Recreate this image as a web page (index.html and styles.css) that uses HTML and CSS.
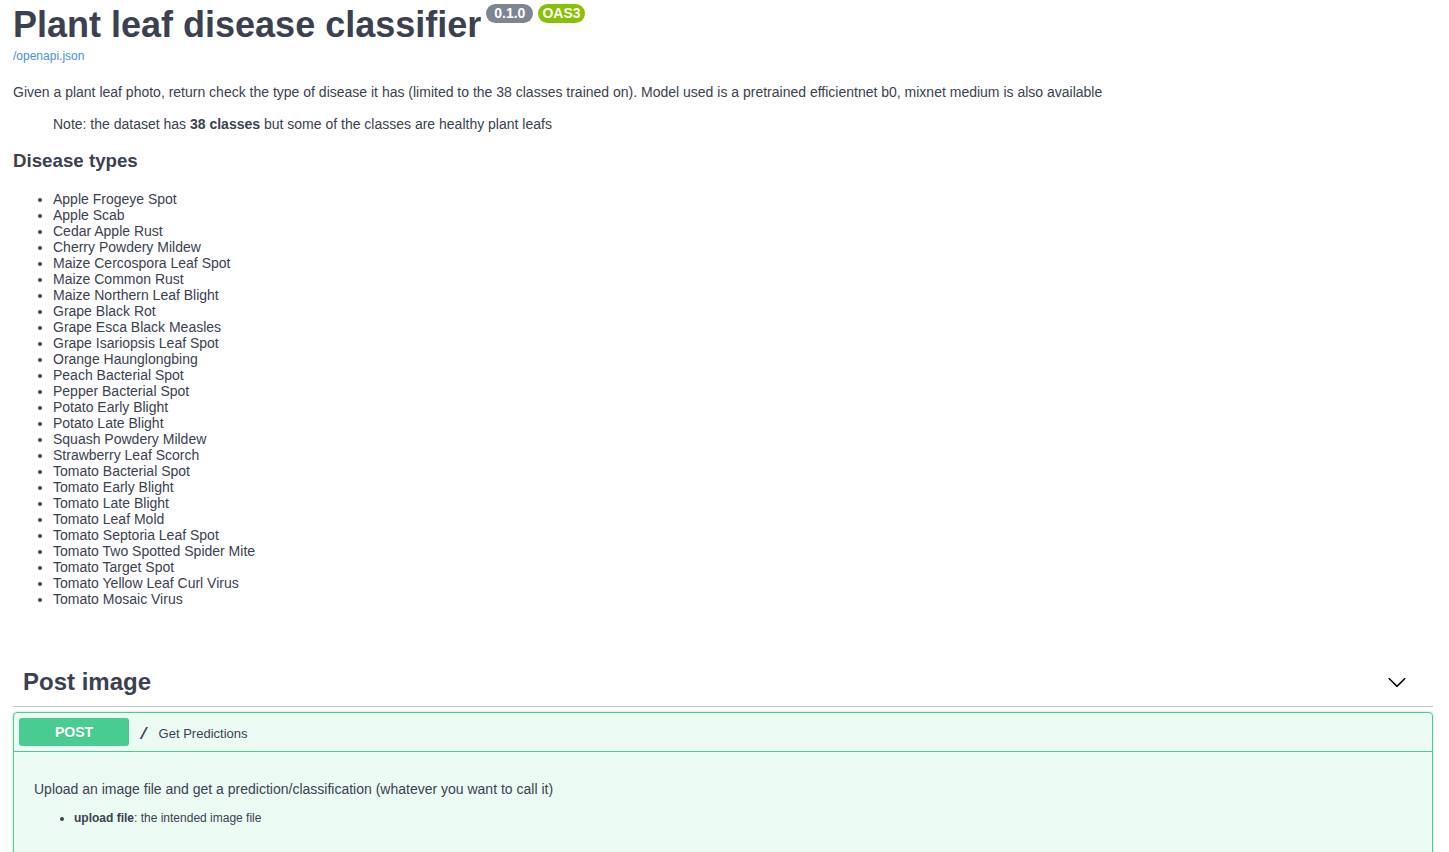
FILE: index.html
```html
<!DOCTYPE html>
<html lang="en">
<head>
<meta charset="utf-8">
<title>Plant leaf disease classifier</title>
<link rel="stylesheet" href="styles.css">
</head>
<body>
<div class="wrapper">
  <section class="info">
    <div class="main">
      <div class="title-row">
        <h2 class="title">Plant leaf disease classifier</h2>
        <span class="badge badge-version">0.1.0</span>
        <span class="badge badge-oas">OAS3</span>
      </div>
      <a class="url" href="#">/openapi.json</a>
    </div>
    <div class="description">
      <p>Given a plant leaf photo, return check the type of disease it has (limited to the 38 classes trained on). Model used is a pretrained efficientnet b0, mixnet medium is also available</p>
      <blockquote class="note"><p>Note: the dataset has <strong>38 classes</strong> but some of the classes are healthy plant leafs</p></blockquote>
      <h3 class="subhead">Disease types</h3>
      <ul class="disease-list">
        <li>Apple Frogeye Spot</li>
        <li>Apple Scab</li>
        <li>Cedar Apple Rust</li>
        <li>Cherry Powdery Mildew</li>
        <li>Maize Cercospora Leaf Spot</li>
        <li>Maize Common Rust</li>
        <li>Maize Northern Leaf Blight</li>
        <li>Grape Black Rot</li>
        <li>Grape Esca Black Measles</li>
        <li>Grape Isariopsis Leaf Spot</li>
        <li>Orange Haunglongbing</li>
        <li>Peach Bacterial Spot</li>
        <li>Pepper Bacterial Spot</li>
        <li>Potato Early Blight</li>
        <li>Potato Late Blight</li>
        <li>Squash Powdery Mildew</li>
        <li>Strawberry Leaf Scorch</li>
        <li>Tomato Bacterial Spot</li>
        <li>Tomato Early Blight</li>
        <li>Tomato Late Blight</li>
        <li>Tomato Leaf Mold</li>
        <li>Tomato Septoria Leaf Spot</li>
        <li>Tomato Two Spotted Spider Mite</li>
        <li>Tomato Target Spot</li>
        <li>Tomato Yellow Leaf Curl Virus</li>
        <li>Tomato Mosaic Virus</li>
      </ul>
    </div>
  </section>

  <section class="tag-section">
    <h3 class="tag-header">
      <span class="tag-name">Post image</span>
      <span class="expand">
        <svg width="20" height="20" viewBox="0 0 20 20" aria-hidden="true"><path d="M17.418 6.109c.272-.268.709-.268.979 0s.271.701 0 .969l-7.908 7.83c-.27.268-.707.268-.979 0l-7.908-7.83c-.27-.268-.27-.701 0-.969.271-.268.709-.268.979 0L10 13.25l7.418-7.141z"/></svg>
      </span>
    </h3>
    <div class="opblock">
      <div class="summary">
        <span class="method">POST</span>
        <span class="path">/</span>
        <span class="summary-desc">Get Predictions</span>
      </div>
      <div class="op-body">
        <p class="op-text">Upload an image file and get a prediction/classification (whatever you want to call it)</p>
        <ul class="op-list">
          <li><strong>upload file</strong>: the intended image file</li>
        </ul>
      </div>
    </div>
  </section>
</div>
</body>
</html>
```
FILE: styles.css
```css
html, body {
  margin: 0;
  padding: 0;
  background: #fff;
  overflow: hidden;
}
body {
  font-family: "Liberation Sans", Arial, sans-serif;
  color: #3b4151;
}
.wrapper {
  padding: 0 16px 0 13px;
}
.info {
  margin: 0 0 50px;
}
.main {
  margin: 0;
}
.title-row {
  display: flex;
  align-items: flex-start;
  padding-top: 4px;
}
.title {
  margin: 0;
  font-size: 36px;
  font-weight: 700;
  line-height: normal;
  color: #3b4151;
}
.badge {
  display: inline-block;
  margin: 0 0 0 5px;
  height: 19px;
  line-height: 19px;
  border-radius: 57px;
  color: #fff;
  font-size: 14px;
  font-weight: 700;
}
.badge-version {
  background: #7d8492;
  padding: 0 8px;
  margin-left: 5px;
}
.badge-oas {
  background: #89bf04;
  padding: 0 4px;
}
.url {
  display: block;
  margin-top: 3px;
  font-size: 12px;
  line-height: 14px;
  color: #4990e2;
  text-decoration: none;
}
.description {
  font-size: 14px;
}
.description p {
  margin: 21px 0 0;
  font-size: 14px;
  line-height: 16px;
}
.note {
  margin: 16px 40px;
}
.note p {
  margin: 0;
}
.subhead {
  margin: 18px 0 19px;
  font-size: 18.72px;
  font-weight: 700;
  line-height: normal;
}
.disease-list {
  margin: 0 0 14px;
  padding-left: 40px;
}
.disease-list li {
  font-size: 14px;
  line-height: 16px;
}
.tag-section {
  margin: 0;
}
.tag-header {
  display: flex;
  align-items: center;
  margin: 0 0 5px;
  padding: 10px 20px 10px 10px;
  border-bottom: 1px solid rgba(59, 65, 81, 0.3);
  font-size: 24px;
  font-weight: 700;
  line-height: 29px;
}
.tag-name {
  flex: 1;
}
.expand {
  display: flex;
  margin-right: 6px;
}
.expand svg {
  fill: #000;
}
.opblock {
  border: 1px solid #49cc90;
  border-radius: 4px;
  background: rgba(73, 204, 144, 0.1);
  box-shadow: 0 0 3px rgba(0, 0, 0, 0.19);
}
.summary {
  display: flex;
  align-items: center;
  padding: 5px;
  border-bottom: 1px solid #49cc90;
}
.method {
  width: 110px;
  padding: 6px 0;
  line-height: 16px;
  text-align: center;
  background: #49cc90;
  color: #fff;
  font-size: 14px;
  font-weight: 700;
  border-radius: 3px;
  text-shadow: 0 1px 0 rgba(0, 0, 0, 0.1);
}
.path {
  padding: 0 10px;
  margin-top: 5px;
  font-family: "Liberation Mono", monospace;
  font-size: 16px;
  font-weight: 700;
  color: #3b4151;
}
.summary-desc {
  margin-top: 2px;
  font-size: 13px;
  color: #3b4151;
}
.op-body {
  padding: 15px 20px 60px;
}
.op-text {
  margin: 14px 0;
  font-size: 14px;
  line-height: 16px;
}
.op-list {
  margin: 0;
  padding-left: 40px;
}
.op-list li {
  font-size: 12px;
  line-height: 14px;
}
```
